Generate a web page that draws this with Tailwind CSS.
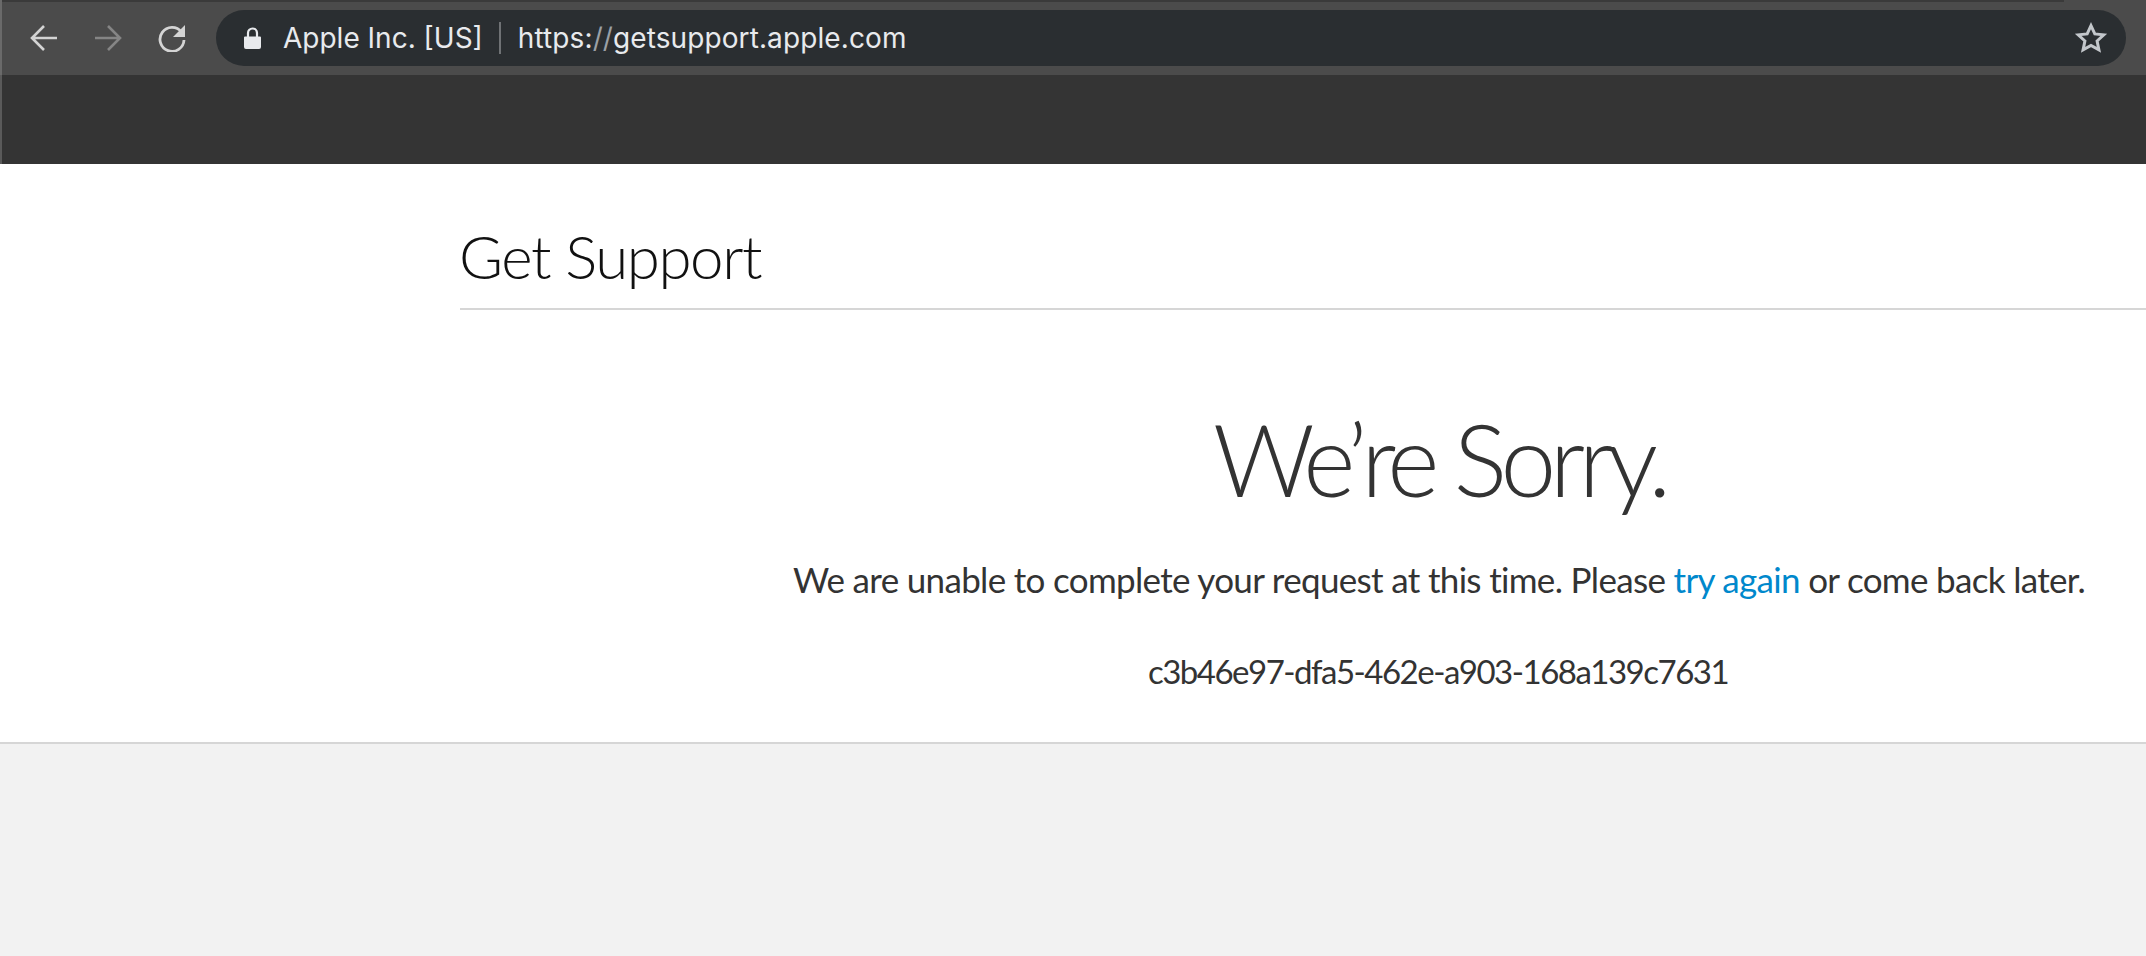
<!DOCTYPE html>
<html lang="en">
<head>
  <meta charset="UTF-8" />
  <title>Get Support</title>
  <script src="https://cdn.jsdelivr.net/npm/@tailwindcss/browser@4"></script>
</head>
<body class="h-[956px] overflow-hidden flex flex-col bg-[#f2f2f2] font-['Lato',sans-serif]">

  <!-- browser toolbar -->
  <header class="h-[75px] shrink-0 flex flex-col bg-[#4b4b4b] border-l-2 border-[#6a6a6a]">
    <div class="h-[2px] bg-[#3a3a3a] mr-[82px]"></div>
    <div class="flex items-center mt-[8px] h-[56px]">
      <nav class="w-[214px] pl-[28px] shrink-0 flex items-center gap-[36px]">
        <svg class="w-[28px] h-[28px]" viewBox="0 0 28 28" fill="none" stroke="#d4d4d4" stroke-width="2.6"><path d="M27 14H3M14 2 2 14l12 12"/></svg>
        <svg class="w-[28px] h-[28px]" viewBox="0 0 28 28" fill="none" stroke="#858585" stroke-width="2.6"><path d="M1 14h24M14 2l12 12-12 12"/></svg>
        <svg class="w-[28px] h-[28px]" viewBox="0 0 28 28" fill="none" stroke="#d4d4d4" stroke-width="2.8"><path d="M23.5 8A12 12 0 1 0 26 16"/><path d="M27 1v12H15z" fill="#d4d4d4" stroke="none"/></svg>
      </nav>
      <div class="flex-1 h-[56px] mr-[20px] rounded-full bg-[#2a2e31] flex items-center pl-[28px] pr-[18px] font-['Inter',sans-serif] text-[28px] text-[#e8eaed]">
        <svg class="w-[17px] h-[22px] shrink-0 mr-[22px]" viewBox="0 0 17 22" fill="#e8eaed"><path d="M1 9.5h15a1 1 0 0 1 1 1V20a2 2 0 0 1-2 2H2a2 2 0 0 1-2-2v-9.500a1 1 0 0 1 1-1z"/><path d="M4 10V6a4.500 4.500 0 0 1 9 0v4" fill="none" stroke="#e8eaed" stroke-width="2.200"/></svg>
        <span>Apple Inc. [US]</span>
        <span class="w-[2px] h-[32px] bg-[#6f7275] ml-[16px] mr-[17px]"></span>
        <span class="tracking-[0.1px]">https:<span class="text-[#9aa0a6]">//</span>getsupport.apple.com</span>
        <svg class="w-[34px] h-[34px] ml-auto" viewBox="0 0 24 24" fill="none" stroke="#c3c7cb" stroke-width="2.1"><path d="m12 3.200 2.700 5.900 6.300.7-4.700 4.300 1.300 6.300-5.600-3.200-5.600 3.200 1.300-6.300L3 9.800l6.300-.7z"/></svg>
      </div>
    </div>
  </header>

  <div class="h-[89px] shrink-0 bg-[#343434] border-l-2 border-[#5a5a5a]"></div>

  <!-- page content -->
  <main class="h-[580px] shrink-0 bg-white border-b-2 border-[#d6d6d6] pl-[460px] overflow-hidden">
    <div class="w-[1956px]">
      <div class="h-[146px] border-b-2 border-[#d6d6d6] flex items-end pb-[12px]">
        <h1 class="-ml-[1px] text-[60px] leading-[80px] font-light tracking-[-1.4px] text-[#111]">Get Support</h1>
      </div>
      <div class="flex flex-col items-center text-[#333]">
        <h2 class="mt-[88px] ml-[2px] text-[100px] leading-[120px] font-light tracking-[-6.4px]">We’re Sorry.</h2>
        <p class="mt-[36px] ml-[2px] text-[35px] leading-[50px] tracking-[-0.67px]">We are unable to complete your request at this time. Please <a href="#" class="text-[#0088cc]">try again</a> or come back later.</p>
        <p class="mt-[42px] text-[33px] leading-[50px] tracking-[-1.5px]">c3b46e97-dfa5-462e-a903-168a139c7631</p>
      </div>
    </div>
  </main>

</body>
</html>
